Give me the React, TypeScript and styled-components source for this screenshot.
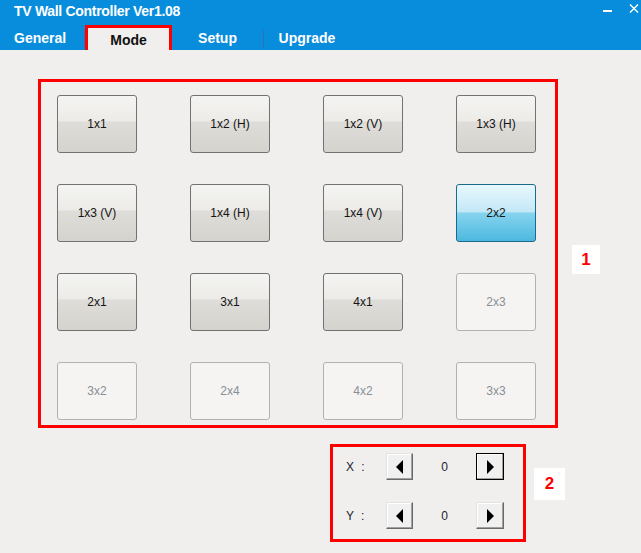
import React from 'react';
import styled, { createGlobalStyle, css } from 'styled-components';

const GlobalStyle = createGlobalStyle`
  html, body {
    margin: 0;
    padding: 0;
    background: #f0efed;
  }
  * {
    box-sizing: border-box;
  }
`;

const Window = styled.div`
  width: 641px;
  height: 553px;
  background: #f0efed;
  font-family: 'Liberation Sans', Arial, sans-serif;
  overflow: hidden;
`;

const Header = styled.div`
  height: 50px;
  background: #088cdc;
  color: #fff;
`;

const TitleRow = styled.div`
  height: 25px;
  display: flex;
  align-items: flex-start;
  padding: 3px 2px 0 14px;
`;

const Title = styled.div`
  font-size: 14px;
  line-height: 16px;
  font-weight: bold;
  letter-spacing: -0.3px;
`;

const WinBtns = styled.div`
  margin-left: auto;
  display: flex;
  align-items: flex-start;
  gap: 17px;
`;

const TabRow = styled.div`
  height: 25px;
  display: flex;
`;

const Tab = styled.div<{ $w: number; $active?: boolean; $sep?: 'left' | 'right'; $start?: boolean }>`
  position: relative;
  width: ${(p) => p.$w}px;
  height: 25px;
  display: flex;
  align-items: center;
  justify-content: ${(p) => (p.$start ? 'flex-start' : 'center')};
  padding-left: ${(p) => (p.$start ? '14px' : '0')};
  font-size: 14px;
  font-weight: bold;
  color: #fff;
  ${(p) =>
    p.$sep &&
    css`
      &::before {
        content: '';
        position: absolute;
        ${p.$sep}: 0;
        top: 5px;
        height: 18px;
        width: 1px;
        background: #2a74b0;
      }
    `}
  ${(p) =>
    p.$active &&
    css`
      background: #f0efed;
      color: #111;
      border: 3px solid #ff0000;
      border-bottom: none;
      padding-top: 2px;
    `}
`;

const Content = styled.div`
  padding: 29px 0 0 38px;
`;

const Row = styled.div`
  display: flex;
  align-items: flex-start;
`;

const RedBox = styled.div`
  border: 3px solid #ff0000;
`;

const ModeGrid = styled(RedBox)`
  width: 520px;
  height: 349px;
  padding: 13px 19px 5px 16px;
  display: grid;
  grid-template-columns: repeat(4, 80px);
  grid-auto-rows: 58px;
  column-gap: 53px;
  row-gap: 31px;
`;

const Tag = styled.div<{ $size: number; $top: number; $left: number }>`
  width: ${(p) => p.$size}px;
  height: ${(p) => p.$size + 1}px;
  margin: ${(p) => p.$top}px 0 0 ${(p) => p.$left}px;
  background: #fff;
  color: #ff0000;
  font-weight: bold;
  font-size: 17px;
  display: flex;
  align-items: center;
  justify-content: center;
`;

type ModeState = 'normal' | 'selected' | 'disabled';

const ModeBtn = styled.button<{ $state: ModeState }>`
  width: 80px;
  height: 58px;
  border-radius: 3px;
  font-family: 'Liberation Sans', Arial, sans-serif;
  font-size: 12px;
  padding: 0;
  border: 1px solid #727272;
  color: #141414;
  background: linear-gradient(
    to bottom,
    #f4f4f2 0%,
    #ecebe8 45%,
    #dfddd9 46%,
    #d5d3ce 100%
  );
  ${(p) =>
    p.$state === 'selected' &&
    css`
      border-color: #1c6a8b;
      background: linear-gradient(
        to bottom,
        #e8f7fd 0%,
        #c3e8f6 48%,
        #86d4ee 50%,
        #4db8df 100%
      );
    `}
  ${(p) =>
    p.$state === 'disabled' &&
    css`
      border-color: #b1b1b1;
      background: #f5f4f2;
      color: #8a8f96;
    `}
`;

const OffsetBox = styled(RedBox)`
  width: 196px;
  height: 98px;
  margin-left: 292px;
  margin-top: 16px;
  padding: 6px 19px 10px 13px;
  display: grid;
  grid-template-columns: 40px 27px 63px 28px;
  grid-auto-rows: 27px;
  row-gap: 22px;
  align-items: center;
  font-size: 12px;
  color: #1a2430;
`;

const AxisLabel = styled.div`
  letter-spacing: 2px;
`;

const Value = styled.div`
  text-align: center;
`;

const ArrowBtn = styled.button<{ $focus?: boolean }>`
  width: 100%;
  height: 27px;
  padding: 0;
  display: flex;
  align-items: center;
  justify-content: center;
  background: #f0f0f0;
  border: 1px solid;
  border-color: #e3e3e3 #6a6a6a #6a6a6a #e3e3e3;
  box-shadow: inset -1px -1px 0 #a0a0a0, inset 1px 1px 0 #ffffff;
  ${(p) =>
    p.$focus &&
    css`
      outline: 1px solid #000;
      outline-offset: -1px;
      border-color: #000 #6a6a6a #6a6a6a #000;
    `}
`;

const Arrow = ({ dir }: { dir: 'left' | 'right' }) => (
  <svg width="8" height="14" viewBox="0 0 8 14">
    {dir === 'left' ? (
      <polygon points="7,0 7,14 0,7" fill="#000" />
    ) : (
      <polygon points="1,0 1,14 8,7" fill="#000" />
    )}
  </svg>
);

const modes: { name: string; state: ModeState }[] = [
  { name: '1x1', state: 'normal' },
  { name: '1x2 (H)', state: 'normal' },
  { name: '1x2 (V)', state: 'normal' },
  { name: '1x3 (H)', state: 'normal' },
  { name: '1x3 (V)', state: 'normal' },
  { name: '1x4 (H)', state: 'normal' },
  { name: '1x4 (V)', state: 'normal' },
  { name: '2x2', state: 'selected' },
  { name: '2x1', state: 'normal' },
  { name: '3x1', state: 'normal' },
  { name: '4x1', state: 'normal' },
  { name: '2x3', state: 'disabled' },
  { name: '3x2', state: 'disabled' },
  { name: '2x4', state: 'disabled' },
  { name: '4x2', state: 'disabled' },
  { name: '3x3', state: 'disabled' }
];

const App = () => {
  return (
    <Window>
      <GlobalStyle />
      <Header>
        <TitleRow>
          <Title>TV Wall Controller Ver1.08</Title>
          <WinBtns>
            <svg width="9" height="12" viewBox="0 0 9 12">
              <rect x="0" y="7" width="9" height="2" fill="#fff" />
            </svg>
            <svg width="10" height="9" viewBox="0 0 10 9" style={{ marginTop: 1 }}>
              <path d="M1 0.5 L9 8.5 M9 0.5 L1 8.5" stroke="#fff" strokeWidth="1.4" />
            </svg>
          </WinBtns>
        </TitleRow>
        <TabRow>
          <Tab $w={85} $start $sep="right">
            General
          </Tab>
          <Tab $w={87} $active>
            Mode
          </Tab>
          <Tab $w={91}>Setup</Tab>
          <Tab $w={88} $sep="left">
            Upgrade
          </Tab>
        </TabRow>
      </Header>
      <Content>
        <Row>
          <ModeGrid>
            {modes.map((m) => (
              <ModeBtn key={m.name} $state={m.state}>
                {m.name}
              </ModeBtn>
            ))}
          </ModeGrid>
          <Tag $size={28} $top={166} $left={14}>
            1
          </Tag>
        </Row>
        <Row>
          <OffsetBox>
            <AxisLabel>X :</AxisLabel>
            <ArrowBtn>
              <Arrow dir="left" />
            </ArrowBtn>
            <Value>0</Value>
            <ArrowBtn $focus>
              <Arrow dir="right" />
            </ArrowBtn>
            <AxisLabel>Y :</AxisLabel>
            <ArrowBtn>
              <Arrow dir="left" />
            </ArrowBtn>
            <Value>0</Value>
            <ArrowBtn>
              <Arrow dir="right" />
            </ArrowBtn>
          </OffsetBox>
          <Tag $size={31} $top={40} $left={8}>
            2
          </Tag>
        </Row>
      </Content>
    </Window>
  );
};

export default App;
